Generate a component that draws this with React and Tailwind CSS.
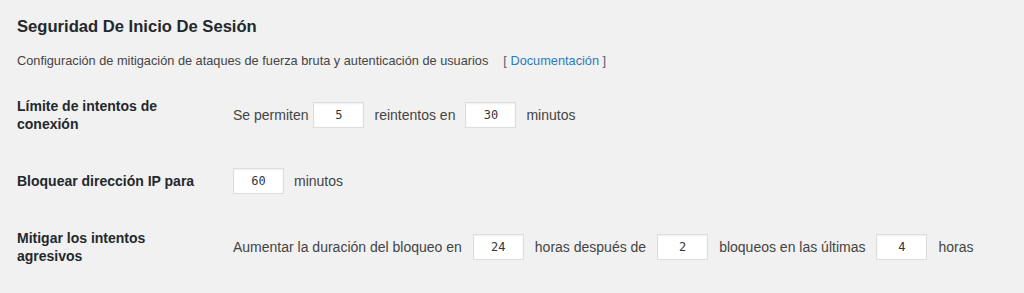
import { Fragment } from "react";

const FONT = { fontFamily: '"Liberation Sans", Arial, sans-serif' };

function NumberBox({ value, className = "" }) {
  return (
    <input
      type="text"
      defaultValue={value}
      className={`w-[51px] h-[26px] shrink-0 bg-white border border-[#dddddd] shadow-[inset_0_1px_2px_rgba(0,0,0,0.07)] text-center text-[12px] text-[#32373c] font-['DejaVu_Sans_Mono',monospace] outline-none ${className}`}
    />
  );
}

function SettingRow({ label, gap = "gap-[10px]", children }) {
  return (
    <div className="flex items-center h-[66px]">
      <div className="w-[190px] mr-[26px] shrink-0 text-[14px] leading-[18px] font-bold text-[#23282d]">
        {label}
      </div>
      <div className={`flex items-center ${gap} text-[14px] text-[#444444] whitespace-nowrap`}>
        {children}
      </div>
    </div>
  );
}

export default function App() {
  return (
    <div
      className="w-[1024px] h-[293px] bg-[#f1f1f1] px-[17px] pt-[15px] overflow-hidden"
      style={FONT}
    >
      <h2 className="text-[16.6px] leading-[24px] font-bold text-[#23282d]">
        Seguridad De Inicio De Sesión
      </h2>
      <p className="mt-[12px] text-[12.75px] leading-[20px] text-[#444444]">
        Configuración de mitigación de ataques de fuerza bruta y autenticación de usuarios
        <span className="ml-[15px] text-[#555d66]">
          [ <a href="#" className="text-[#2a7bc1]">Documentación</a> ]
        </span>
      </p>

      <div className="mt-[11px]">
        <SettingRow label="Límite de intentos de conexión">
          <span>Se permiten</span>
          <NumberBox value="5" className="-ml-[5px]" />
          <span>reintentos en</span>
          <NumberBox value="30" />
          <span>minutos</span>
        </SettingRow>

        <SettingRow label="Bloquear dirección IP para">
          <NumberBox value="60" />
          <span>minutos</span>
        </SettingRow>

        <SettingRow label="Mitigar los intentos agresivos" gap="gap-[11px]">
          {[
            ["Aumentar la duración del bloqueo en", "24"],
            ["horas después de", "2"],
            ["bloqueos en las últimas", "4"],
          ].map(([text, val]) => (
            <Fragment key={text}>
              <span>{text}</span>
              <NumberBox value={val} />
            </Fragment>
          ))}
          <span>horas</span>
        </SettingRow>
      </div>
    </div>
  );
}
